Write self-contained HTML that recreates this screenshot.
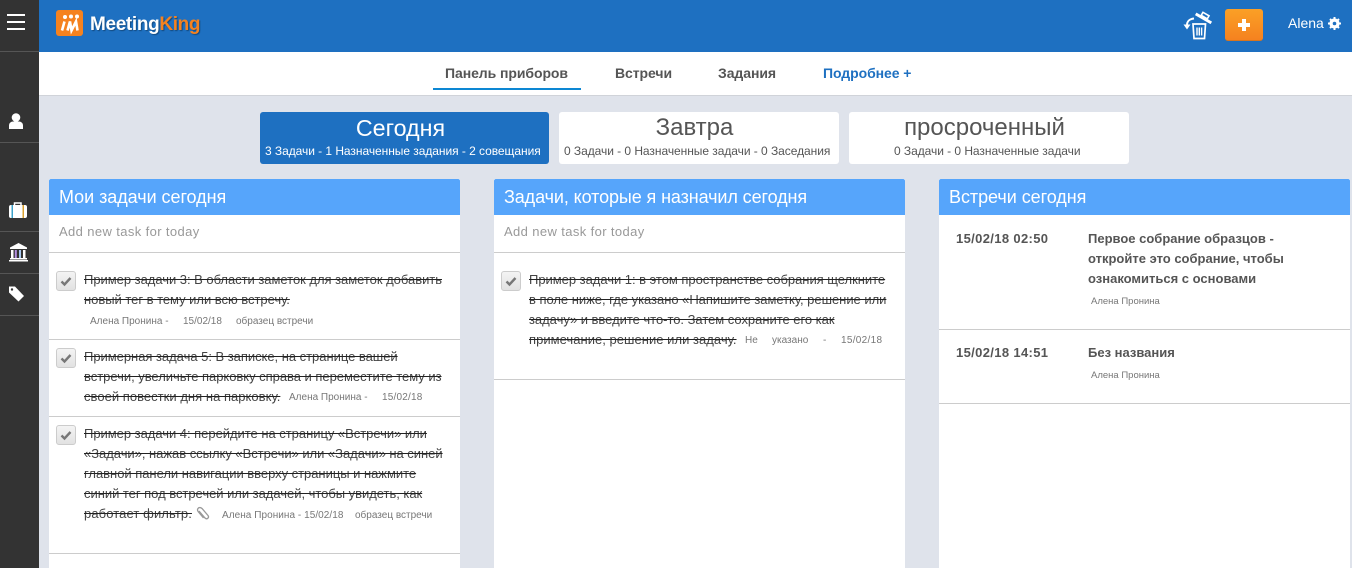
<!DOCTYPE html>
<html><head><meta charset="utf-8">
<style>
*{box-sizing:border-box}
html,body{margin:0;padding:0}
body{width:1352px;height:568px;overflow:hidden;position:relative;background:#dfe3eb;font-family:"Liberation Sans","Noto Sans CJK SC",sans-serif;color:#555}
.a{position:absolute;white-space:nowrap}
.b{position:absolute}
.t{position:absolute;white-space:nowrap;font-size:13px;line-height:20px;color:#444;letter-spacing:-.03px}
.s{text-decoration:line-through;text-decoration-color:#222}
.m{position:absolute;white-space:nowrap;font-size:10px;line-height:14px;color:#777}
.hr{position:absolute;height:1px;background:#ccc}
.sh{position:absolute;left:0;width:39px;height:1px;background:#555}
.col{position:absolute;top:179px;width:411px;height:389px;background:#fff}
.ch{position:absolute;left:0;top:0;width:411px;height:36px;background:#56a5fb;color:#fff;font-size:18px;letter-spacing:-.05px;line-height:37px;padding-left:10px;border-radius:2px 2px 0 0}
.add{position:absolute;left:10px;top:45px;font-size:13px;line-height:16px;color:#999;letter-spacing:.38px}
.cb{position:absolute;width:20px;height:20px;border:1px solid #ccc;border-radius:3px;background:linear-gradient(#f4f4f4,#e2e2e2)}
.tab{position:absolute;top:112px;height:52px;background:#fff;border-radius:3px;color:#555}
.tab .h{position:absolute;top:1px;left:0;right:9px;text-align:center;font-size:24px;line-height:30px}
.tab .d{position:absolute;top:32px;left:0;width:100%;white-space:nowrap;font-size:12px;line-height:14px}
.nav{position:absolute;top:65px;font-size:14px;font-weight:bold;line-height:16px;color:#555;letter-spacing:-.07px}
.bd{position:absolute;white-space:nowrap;font-size:13px;font-weight:bold;line-height:20px;color:#555}
.ck{position:absolute}
</style></head><body>

<div class="b" style="left:0;top:0;width:39px;height:568px;background:#333"></div>
<div class="b" style="left:39px;top:0;width:1313px;height:52px;background:#1e70c1"></div>
<div class="b" style="left:39px;top:52px;width:1313px;height:44px;background:#fff;border-bottom:1px solid #d0d3d9"></div>

<div class="b" style="left:7px;top:14px;width:18px;height:2px;background:#fff"></div>
<div class="b" style="left:7px;top:21px;width:18px;height:2px;background:#fff"></div>
<div class="b" style="left:7px;top:28px;width:18px;height:2px;background:#fff"></div>
<div class="sh" style="top:51px"></div>
<div class="sh" style="top:142px"></div>
<div class="sh" style="top:231px"></div>
<div class="sh" style="top:273px"></div>
<div class="sh" style="top:315px"></div>

<svg class="b" style="left:8px;top:112px" width="16" height="18" viewBox="0 0 16 18"><circle cx="8" cy="5.500" r="4.300" fill="#fff"/><path d="M1 17v-3.500C1 11 3 9.500 5 9.500h6c2 0 4 1.500 4 4V17z" fill="#fff"/></svg>
<svg class="b" style="left:8px;top:201px" width="20" height="18" viewBox="0 0 20 18"><path d="M6.500 4V2h6.500v2" fill="none" stroke="#fff" stroke-width="1.500"/><rect x="1" y="4" width="18" height="13" rx="2" fill="#fff"/><rect x="3.500" y="4" width="1.500" height="13" fill="#3aa0c8"/><rect x="14.500" y="4" width="1.500" height="13" fill="#d8a030"/></svg>
<svg class="b" style="left:8px;top:242px" width="21" height="20" viewBox="0 0 21 20"><path d="M10.500 1L19 5.500V7H2V5.500z" fill="#fff"/><rect x="3" y="8" width="2.500" height="8" fill="#fff"/><rect x="6.800" y="8" width="2" height="8" fill="#b48fe0"/><rect x="11" y="8" width="2" height="8" fill="#a8c8f0"/><rect x="15" y="8" width="2.500" height="8" fill="#fff"/><rect x="2" y="16" width="17" height="1.500" fill="#fff"/><rect x="1" y="18" width="19" height="1.500" fill="#fff"/></svg>
<svg class="b" style="left:8px;top:285px" width="17" height="17" viewBox="0 0 17 17"><path d="M1 1.500h6l9 9.500-5.500 5.500L1 7.500z" fill="#fff"/><circle cx="4" cy="4.500" r="1.200" fill="#333"/></svg>

<div class="b" style="left:56px;top:10px;width:27px;height:26px;background:#f5821f;border-radius:3px"></div>
<svg class="b" style="left:56px;top:10px" width="27" height="26" viewBox="0 0 27 26"><circle cx="9" cy="7" r="2" fill="#fff"/><circle cx="15" cy="6.500" r="2" fill="#fff"/><circle cx="21" cy="6.500" r="2" fill="#fff"/><path d="M6 20.500L8.500 11.500M11.500 20.500L14 11.500 15.500 20.500 20 11.500 21.500 20.500" fill="none" stroke="#fff" stroke-width="2.600"/></svg>
<div class="a" style="left:90px;top:13px;font-size:19px;font-weight:bold;line-height:24px;color:#fff;letter-spacing:-.35px;text-shadow:1px 1px 1px rgba(0,0,0,.35)">Meeting<span style="color:#f5821f">King</span></div>

<svg class="b" style="left:1183px;top:11px" width="31" height="29" viewBox="0 0 31 29" fill="none" stroke="#fff">
<path d="M10 13h12.500l-1 14.500H11z" stroke-width="1.700"/>
<path d="M14 16.500v8M16.300 16.500v8M18.600 16.500v8" stroke-width="1.400"/>
<g transform="rotate(30 21 6.500)"><rect x="12" y="6" width="18" height="3" fill="#fff" stroke="none"/><rect x="17.500" y="2.500" width="7" height="3.500" stroke-width="1.600"/></g>
<path d="M11 7.500C6 8 4 11 4 14" stroke-width="2"/>
<path d="M0.500 13.500L4 18.500 7.500 13.500z" fill="#fff" stroke="none"/>
</svg>
<div class="b" style="left:1225px;top:9px;width:38px;height:32px;background:linear-gradient(#fba026,#f5821f);border-radius:3px;border-bottom:1px solid #d8751f"></div>
<div class="b" style="left:1238px;top:23px;width:12px;height:4px;background:#fff"></div>
<div class="b" style="left:1242px;top:19px;width:4px;height:12px;background:#fff"></div>
<div class="a" style="left:1288px;top:15px;font-size:14px;line-height:16px;color:#fff">Alena</div>
<svg class="b" style="left:1328px;top:17px" width="13" height="13" viewBox="0 0 13 13"><circle cx="6.500" cy="6.500" r="3.800" fill="none" stroke="#fff" stroke-width="2.600"/><path d="M6.500 0v13M0 6.500h13M2 2l9 9M11 2l-9 9" stroke="#fff" stroke-width="2"/><circle cx="6.500" cy="6.500" r="1.800" fill="#1e70c1"/></svg>

<div class="nav" style="left:445px">Панель приборов</div>
<div class="b" style="left:433px;top:88px;width:148px;height:2px;background:#0d87d3"></div>
<div class="nav" style="left:615px">Встречи</div>
<div class="nav" style="left:718px">Задания</div>
<div class="nav" style="left:823px;color:#1e70c1">Подробнее +</div>

<div class="tab" style="left:260px;width:289px;background:#1e70c1;color:#fff"><div class="h" style="font-size:23.300px;right:8px">Сегодня</div><div class="d" style="padding-left:5px;letter-spacing:-.05px">3 Задачи - 1 Назначенные задания - 2 совещания</div></div>
<div class="tab" style="left:559px;width:280px"><div class="h">Завтра</div><div class="d" style="padding-left:5px;letter-spacing:-.05px">0 Задачи - 0 Назначенные задачи - 0 Заседания</div></div>
<div class="tab" style="left:849px;width:280px"><div class="h">просроченный</div><div class="d" style="padding-left:45px;letter-spacing:-.05px">0 Задачи - 0 Назначенные задачи</div></div>

<div class="col" style="left:49px">
<div class="ch">Мои задачи сегодня</div>
<div class="add">Add new task for today</div>
<div class="hr" style="left:0;top:73px;width:411px"></div>
<div class="hr" style="left:0;top:160px;width:411px"></div>
<div class="hr" style="left:0;top:237px;width:411px"></div>
<div class="hr" style="left:0;top:374px;width:411px"></div>
<div class="cb" style="left:7px;top:92px"></div><svg class="ck" style="left:11px;top:96px" width="12" height="12" viewBox="0 0 12 12"><path d="M1.500 6.500L4.500 9.500 10.500 3" fill="none" stroke="#777" stroke-width="2.400"/></svg>
<div class="cb" style="left:7px;top:169px"></div><svg class="ck" style="left:11px;top:173px" width="12" height="12" viewBox="0 0 12 12"><path d="M1.500 6.500L4.500 9.500 10.500 3" fill="none" stroke="#777" stroke-width="2.400"/></svg>
<div class="cb" style="left:7px;top:246px"></div><svg class="ck" style="left:11px;top:250px" width="12" height="12" viewBox="0 0 12 12"><path d="M1.500 6.500L4.500 9.500 10.500 3" fill="none" stroke="#777" stroke-width="2.400"/></svg>
<div class="t s" style="left:35px;top:91px">Пример задачи 3: В области заметок для заметок добавить</div>
<div class="t s" style="left:35px;top:111px">новый тег в тему или всю встречу.</div>
<div class="m" style="left:41px;top:136px">Алена Пронина -</div>
<div class="m" style="left:134px;top:136px">15/02/18</div>
<div class="m" style="left:187px;top:136px">образец встречи</div>
<div class="t s" style="left:35px;top:168px">Примерная задача 5: В записке, на странице вашей</div>
<div class="t s" style="left:35px;top:188px">встречи, увеличьте парковку справа и переместите тему из</div>
<div class="t s" style="left:35px;top:208px;letter-spacing:.03px">своей повестки дня на парковку.</div>
<div class="m" style="left:240px;top:212px">Алена Пронина -</div>
<div class="m" style="left:333px;top:212px;letter-spacing:.2px">15/02/18</div>
<div class="t s" style="left:35px;top:245px">Пример задачи 4: перейдите на страницу «Встречи» или</div>
<div class="t s" style="left:35px;top:265px">«Задачи», нажав ссылку «Встречи» или «Задачи» на синей</div>
<div class="t s" style="left:35px;top:285px">главной панели навигации вверху страницы и нажмите</div>
<div class="t s" style="left:35px;top:305px">синий тег под встречей или задачей, чтобы увидеть, как</div>
<div class="t s" style="left:35px;top:325px;letter-spacing:.1px">работает фильтр.</div>
<svg class="b" style="left:146px;top:327px" width="16" height="16" viewBox="0 0 16 16" fill="none" stroke="#999" stroke-width="1.300"><path d="M4 5l6 7c2 2 4.500-.5 3-2.500L7 2.500C6 1.500 4 1 3 2.500S2.500 5 3.500 6l5 6"/></svg>
<div class="m" style="left:173px;top:330px;letter-spacing:.05px">Алена Пронина - 15/02/18</div>
<div class="m" style="left:306px;top:330px">образец встречи</div>
</div>

<div class="col" style="left:494px">
<div class="ch" style="letter-spacing:-.1px">Задачи, которые я назначил сегодня</div>
<div class="add">Add new task for today</div>
<div class="hr" style="left:0;top:73px;width:411px"></div>
<div class="hr" style="left:0;top:200px;width:411px"></div>
<div class="cb" style="left:7px;top:92px"></div><svg class="ck" style="left:11px;top:96px" width="12" height="12" viewBox="0 0 12 12"><path d="M1.500 6.500L4.500 9.500 10.500 3" fill="none" stroke="#777" stroke-width="2.400"/></svg>
<div class="t s" style="left:35px;top:91px">Пример задачи 1: в этом пространстве собрания щелкните</div>
<div class="t s" style="left:35px;top:111px">в поле ниже, где указано «Напишите заметку, решение или</div>
<div class="t s" style="left:35px;top:131px">задачу» и введите что-то. Затем сохраните его как</div>
<div class="t s" style="left:35px;top:151px;letter-spacing:.03px">примечание, решение или задачу.</div>
<div class="m" style="left:251px;top:155px">Не</div>
<div class="m" style="left:278px;top:155px">указано</div>
<div class="m" style="left:329px;top:155px">-</div>
<div class="m" style="left:347px;top:155px;letter-spacing:.3px">15/02/18</div>
</div>

<div class="col" style="left:939px">
<div class="ch">Встречи сегодня</div>
<div class="bd" style="left:17px;top:50px;letter-spacing:.35px">15/02/18 02:50</div>
<div class="bd" style="left:149px;top:50px">Первое собрание образцов -</div>
<div class="bd" style="left:149px;top:70px">откройте это собрание, чтобы</div>
<div class="bd" style="left:149px;top:90px">ознакомиться с основами</div>
<div class="m" style="left:152px;top:116px;font-size:9.500px">Алена Пронина</div>
<div class="hr" style="left:0;top:150px;width:411px"></div>
<div class="bd" style="left:17px;top:164px;letter-spacing:.35px">15/02/18 14:51</div>
<div class="bd" style="left:149px;top:164px">Без названия</div>
<div class="m" style="left:152px;top:190px;font-size:9.500px">Алена Пронина</div>
<div class="hr" style="left:0;top:224px;width:411px"></div>
</div>
</body></html>
